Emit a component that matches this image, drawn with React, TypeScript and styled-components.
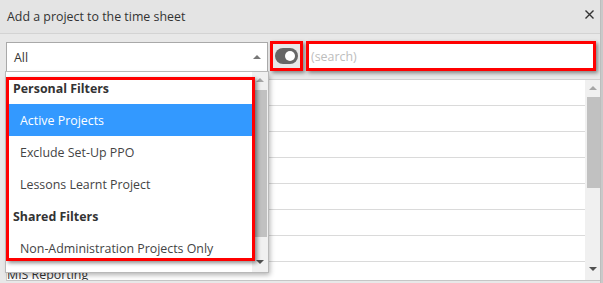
import React from "react";
import styled, { createGlobalStyle } from "styled-components";

const Global = createGlobalStyle`
  html, body { margin: 0; padding: 0; }
  body {
    background: #c9c9c9;
    font-family: "Open Sans", "Noto Sans", sans-serif;
    font-size: 12.4px;
    color: #333;
  }
  * { box-sizing: border-box; }
`;

const Window = styled.div`
  width: 603px;
  height: 283px;
  overflow: hidden;
  display: flex;
  background: #c9c9c9;
`;

const Dialog = styled.div`
  width: 601px;
  height: 283px;
  background: #e8e8e8;
  border-right: 1px solid #bdbdbd;
  display: flex;
  flex-direction: column;
  overflow: hidden;
`;

const TitleBar = styled.div`
  height: 34px;
  flex-shrink: 0;
  border-bottom: 1px solid #d3d3d3;
  background: #e4e4e4;
  display: flex;
  align-items: flex-start;
  justify-content: space-between;
  padding: 0 6px 0 7px;
`;

const Title = styled.div`
  margin-top: 8px;
  line-height: 18px;
  color: #333;
`;

const CloseButton = styled.button`
  margin-top: 10px;
  width: 9px;
  height: 9px;
  padding: 0;
  border: none;
  background: transparent;
  display: flex;
  cursor: pointer;
`;

const Body = styled.div`
  flex: 1;
  display: flex;
  flex-direction: column;
  padding: 7px 0 2px 6px;
  gap: 7px;
  min-height: 0;
`;

const Toolbar = styled.div`
  display: flex;
  align-items: flex-start;
  height: 31px;
  flex-shrink: 0;
  position: relative;
  z-index: 2;
`;

const Select = styled.div`
  position: relative;
  margin-top: 1px;
  width: 262px;
  height: 30px;
  border: 1px solid #a9a9a9;
  background: #fff;
  display: flex;
  align-items: center;
  padding: 0 6px 0 7px;
  color: #333;
`;

const SelectValue = styled.span`
  flex: 1;
`;

const Tri = styled.span<{ $dir: "up" | "down"; $color: string }>`
  width: 0;
  height: 0;
  border-left: 4px solid transparent;
  border-right: 4px solid transparent;
  ${(p) =>
    p.$dir === "up"
      ? `border-bottom: 4px solid ${p.$color};`
      : `border-top: 4px solid ${p.$color};`}
`;

const Annotated = styled.div`
  border: 3px solid #ff0000;
  box-shadow: 2px 2px 4px rgba(0, 0, 0, 0.45);
`;

const ToggleFrame = styled(Annotated)`
  margin-left: 2px;
  width: 33px;
  height: 30px;
  display: flex;
  align-items: center;
  justify-content: center;
`;

const TogglePill = styled.div`
  width: 23px;
  height: 16px;
  border-radius: 8px;
  background: #666;
  display: flex;
  align-items: center;
  justify-content: flex-end;
  padding-right: 3px;
`;

const Knob = styled.div`
  width: 10px;
  height: 10px;
  border-radius: 50%;
  background: #fff;
`;

const SearchFrame = styled(Annotated)`
  margin-left: 3px;
  width: 290px;
  height: 30px;
  background: #fff;
  display: flex;
`;

const SearchInput = styled.input`
  flex: 1;
  border: none;
  outline: none;
  background: #fff;
  padding: 0 0 0 2px;
  font-family: inherit;
  font-size: 12.4px;
  color: #333;
  &::placeholder { color: #bdbdbd; }
`;

const Popup = styled.div`
  position: absolute;
  left: -1px;
  top: calc(100% + 1px);
  width: 262px;
  height: 200px;
  background: #fff;
  box-shadow: 0 0 0 1px #b9b9b9, 2px 3px 5px rgba(0, 0, 0, 0.3);
  display: flex;
  overflow: hidden;
`;

const Options = styled.div`
  width: 246px;
  flex-shrink: 0;
  display: flex;
  flex-direction: column;
`;

const Option = styled.div<{ $header?: boolean; $active?: boolean }>`
  height: 32px;
  flex-shrink: 0;
  display: flex;
  align-items: center;
  padding-left: ${(p) => (p.$header ? "7px" : "14px")};
  font-weight: ${(p) => (p.$header ? 700 : 400)};
  color: ${(p) => (p.$active ? "#fff" : p.$header ? "#333" : "#444")};
  background: ${(p) => (p.$active ? "#3399ff" : "transparent")};
  white-space: nowrap;
`;

const ListAnnotation = styled(Annotated)`
  position: absolute;
  left: 0;
  top: 5px;
  width: 249px;
  height: 184px;
  pointer-events: none;
  z-index: 1;
`;

const ScrollBar = styled.div<{ $width: number }>`
  width: ${(p) => p.$width}px;
  flex-shrink: 0;
  background: #f0f0f0;
  display: flex;
  flex-direction: column;
  align-items: center;
`;

const ScrollButton = styled.div`
  height: 16px;
  width: 100%;
  flex-shrink: 0;
  display: flex;
  align-items: center;
  justify-content: center;
`;

const Thumb = styled.div<{ $top: number; $height: number }>`
  margin-top: ${(p) => p.$top}px;
  height: ${(p) => p.$height}px;
  width: 13px;
  background: #c1c1c1;
  flex-shrink: 0;
`;

const Spacer = styled.div<{ $size?: number }>`
  flex: ${(p) => (p.$size ? `0 0 ${p.$size}px` : "1")};
`;

const Grid = styled.div`
  flex: 1;
  min-height: 0;
  width: 595px;
  background: #fff;
  border-top: 1px solid #cfcfcf;
  border-left: 1px solid #cfcfcf;
  border-bottom: 1px solid #c6c6c6;
  display: flex;
  overflow: hidden;
`;

const Rows = styled.div`
  flex: 1;
  display: flex;
  flex-direction: column;
`;

const Row = styled.div`
  height: 26px;
  flex-shrink: 0;
  border-bottom: 1px solid #dadada;
  display: flex;
  align-items: center;
  padding-left: 0;
  color: #333;
  white-space: nowrap;
`;

const personal = ["Active Projects", "Exclude Set-Up PPO", "Lessons Learnt Project"];
const shared = ["Non-Administration Projects Only"];
const rows = ["", "", "", "", "", "", "", "MIS Reporting"];

export default function App() {
  return (
    <>
      <Global />
      <Window>
        <Dialog>
          <TitleBar>
            <Title>Add a project to the time sheet</Title>
            <CloseButton aria-label="Close">
              <svg width="9" height="9" viewBox="0 0 9 9">
                <path d="M0.5 0.5 L8.5 8.5 M8.5 0.5 L0.5 8.5" stroke="#333" strokeWidth="1.4" />
              </svg>
            </CloseButton>
          </TitleBar>
          <Body>
            <Toolbar>
              <Select>
                <SelectValue>All</SelectValue>
                <Tri $dir="up" $color="#777" />
                <Popup>
                  <ListAnnotation />
                  <Options>
                    <Option $header>Personal Filters</Option>
                    {personal.map((p, i) => (
                      <Option key={p} $active={i === 0}>
                        {p}
                      </Option>
                    ))}
                    <Option $header>Shared Filters</Option>
                    {shared.map((p) => (
                      <Option key={p}>{p}</Option>
                    ))}
                  </Options>
                  <ScrollBar $width={16}>
                    <ScrollButton>
                      <Tri $dir="up" $color="#a6a6a6" />
                    </ScrollButton>
                    <Thumb $top={2} $height={147} />
                    <Spacer />
                    <ScrollButton>
                      <Tri $dir="down" $color="#505050" />
                    </ScrollButton>
                    <Spacer $size={2} />
                  </ScrollBar>
                </Popup>
              </Select>
              <ToggleFrame>
                <TogglePill>
                  <Knob />
                </TogglePill>
              </ToggleFrame>
              <SearchFrame>
                <SearchInput placeholder="(search)" />
              </SearchFrame>
            </Toolbar>
            <Grid>
              <Rows>
                {rows.map((r, i) => (
                  <Row key={i}>{r}</Row>
                ))}
              </Rows>
              <ScrollBar $width={16}>
                <ScrollButton>
                  <Tri $dir="up" $color="#a6a6a6" />
                </ScrollButton>
                <Thumb $top={1} $height={91} />
                <Spacer />
                <ScrollButton>
                  <Tri $dir="down" $color="#505050" />
                </ScrollButton>
                <Spacer $size={3} />
              </ScrollBar>
            </Grid>
          </Body>
        </Dialog>
      </Window>
    </>
  );
}
